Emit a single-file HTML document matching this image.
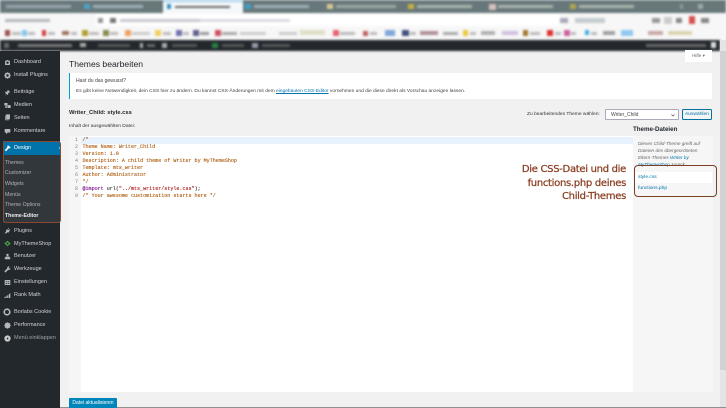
<!DOCTYPE html>
<html lang="de"><head><meta charset="utf-8"><title>Themes bearbeiten</title>
<style>
*{box-sizing:border-box}
html,body{margin:0;padding:0;width:726px;height:408px;overflow:hidden;background:#f1f1f1;font-family:"Liberation Sans",sans-serif}
#w{position:absolute;left:0;top:0;width:726px;height:408px;overflow:hidden;filter:blur(.35px);background:#f1f1f1}
.a{position:absolute;white-space:nowrap}
#top{position:absolute;left:0;top:0;width:726px;height:51px;overflow:hidden;filter:blur(1px)}
#top i{position:absolute;display:block}
.n{position:absolute;left:14px;font-size:5.5px;color:#d0d3d6;white-space:nowrap;line-height:8px}
.s{position:absolute;left:5px;font-size:5.2px;color:#b0b4b7;white-space:nowrap;line-height:8px}
.ic{position:absolute;left:3.5px;width:7px;height:7px;fill:#b4b8bc}
.code{position:absolute;left:82.5px;font:5.05px/7px "Liberation Mono",monospace;color:#aa5500;white-space:nowrap;-webkit-text-stroke:.1px}
.ln{position:absolute;left:64px;width:14px;text-align:right;font:5px/7px "Liberation Mono",monospace;color:#888}
</style></head><body><div id="w">
<div id="top">
<i style="left:0;top:0;width:726px;height:13px;background:#68787a"></i>
<i style="left:163px;top:0;width:80px;height:13px;background:#f4f8fa"></i>
<i style="left:163px;top:0;width:80px;height:2px;background:#a8d4f0"></i>
<i style="left:6px;top:5px;width:65px;height:3px;background:#9aa5ad"></i>
<i style="left:84px;top:4px;width:6px;height:5px;background:#4aa3c8"></i>
<i style="left:93px;top:5px;width:50px;height:3px;background:#9fb0b5"></i>
<i style="left:167px;top:4px;width:4px;height:5px;background:#3b8fc0"></i>
<i style="left:175px;top:6px;width:55px;height:2px;background:#666"></i>
<i style="left:245px;top:4px;width:6px;height:5px;background:#3fa0c8"></i>
<i style="left:254px;top:5px;width:55px;height:3px;background:#9fb0b5"></i>
<i style="left:327px;top:4px;width:6px;height:5px;background:#d8c890"></i>
<i style="left:336px;top:5px;width:60px;height:3px;background:#9fa8a5"></i>
<i style="left:408px;top:4px;width:6px;height:5px;background:#c8b040"></i>
<i style="left:417px;top:5px;width:55px;height:3px;background:#a9b3ae"></i>
<i style="left:489px;top:4px;width:7px;height:6px;background:#d8c0c0"></i>
<i style="left:498px;top:5px;width:55px;height:3px;background:#a9b3ae"></i>
<i style="left:570px;top:4px;width:6px;height:5px;background:#b0a850"></i>
<i style="left:579px;top:5px;width:55px;height:3px;background:#a9b3ae"></i>
<i style="left:680px;top:4px;width:3px;height:5px;background:#8a9a9a"></i>
<i style="left:698px;top:4px;width:5px;height:5px;background:#9aa8a8"></i>
<i style="left:0;top:13px;width:726px;height:27px;background:#f7f7f7"></i>
<i style="left:96px;top:14px;width:464px;height:12px;background:#fff"></i>
<i style="left:5px;top:19px;width:45px;height:3px;background:#b5b8bb"></i>
<i style="left:98px;top:18px;width:5px;height:5px;background:#999"></i>
<i style="left:110px;top:18px;width:6px;height:5px;background:#777"></i>
<i style="left:120px;top:19px;width:80px;height:3px;background:#c8c8d0"></i>
<i style="left:200px;top:19px;width:90px;height:3px;background:#dcdce2"></i>
<i style="left:560px;top:18px;width:8px;height:5px;background:#aab"></i>
<i style="left:575px;top:18px;width:30px;height:5px;background:#c5ccd0"></i>
<i style="left:652px;top:18px;width:8px;height:5px;background:#999"></i>
<i style="left:664px;top:17px;width:8px;height:7px;background:#ccc"></i>
<i style="left:676px;top:18px;width:6px;height:5px;background:#888"></i>
<i style="left:689px;top:16px;width:6px;height:8px;background:#d85050"></i>
<i style="left:701px;top:18px;width:8px;height:5px;background:#888"></i>
<i style="left:5px;top:30px;width:5px;height:6px;background:#a05050"></i><i style="left:12px;top:32px;width:9px;height:3px;background:#bbb"></i>
<i style="left:22px;top:30px;width:5px;height:6px;background:#80c8f0"></i><i style="left:28px;top:32px;width:7px;height:3px;background:#bbb"></i>
<i style="left:42px;top:30px;width:4px;height:6px;background:#d04040"></i><i style="left:48px;top:32px;width:7px;height:3px;background:#bbb"></i>
<i style="left:62px;top:31px;width:7px;height:4px;background:#a07060"></i><i style="left:71px;top:32px;width:6px;height:3px;background:#bbb"></i>
<i style="left:82px;top:30px;width:6px;height:6px;background:#b0a030"></i><i style="left:89px;top:32px;width:10px;height:3px;background:#bbb"></i>
<i style="left:103px;top:30px;width:6px;height:6px;background:#8a8a50"></i><i style="left:110px;top:32px;width:8px;height:3px;background:#bbb"></i>
<i style="left:125px;top:30px;width:6px;height:6px;background:#f0a060"></i><i style="left:132px;top:32px;width:18px;height:3px;background:#ccc"></i>
<i style="left:155px;top:30px;width:6px;height:6px;background:#f0d060"></i><i style="left:163px;top:32px;width:8px;height:3px;background:#bbb"></i>
<i style="left:176px;top:30px;width:6px;height:6px;background:#7070b0"></i><i style="left:183px;top:32px;width:6px;height:3px;background:#bbb"></i>
<i style="left:193px;top:30px;width:6px;height:6px;background:#606090"></i><i style="left:200px;top:32px;width:9px;height:3px;background:#999"></i>
<i style="left:215px;top:30px;width:6px;height:6px;background:#d05060"></i><i style="left:222px;top:32px;width:15px;height:3px;background:#aaa"></i>
<i style="left:240px;top:32px;width:26px;height:3px;background:#ccc"></i>
<i style="left:279px;top:32px;width:18px;height:3px;background:#ccc"></i>
<i style="left:300px;top:30px;width:25px;height:5px;background:#e0e0c8"></i>
<i style="left:333px;top:30px;width:6px;height:6px;background:#e86070"></i><i style="left:340px;top:32px;width:15px;height:3px;background:#bbb"></i>
<i style="left:363px;top:31px;width:5px;height:5px;background:#c06060"></i><i style="left:370px;top:32px;width:7px;height:3px;background:#bbb"></i>
<i style="left:385px;top:30px;width:10px;height:6px;background:#80a8d8"></i>
<i style="left:402px;top:30px;width:7px;height:6px;background:#405080"></i><i style="left:410px;top:32px;width:6px;height:3px;background:#bbb"></i>
<i style="left:420px;top:31px;width:18px;height:4px;background:#b09098"></i>
<i style="left:443px;top:32px;width:15px;height:3px;background:#aaa"></i>
<i style="left:463px;top:30px;width:5px;height:6px;background:#e8c840"></i><i style="left:470px;top:32px;width:6px;height:3px;background:#bbb"></i>
<i style="left:481px;top:31px;width:14px;height:4px;background:#b0b0b0"></i>
<i style="left:502px;top:31px;width:16px;height:4px;background:#d0c0e0"></i>
<i style="left:523px;top:30px;width:5px;height:6px;background:#a07830"></i><i style="left:530px;top:32px;width:10px;height:3px;background:#bbb"></i>
<i style="left:547px;top:30px;width:6px;height:6px;background:#e03030"></i><i style="left:555px;top:32px;width:6px;height:3px;background:#bbb"></i>
<i style="left:564px;top:30px;width:6px;height:6px;background:#d060a0"></i><i style="left:571px;top:32px;width:5px;height:3px;background:#bbb"></i>
<i style="left:585px;top:30px;width:4px;height:5px;background:#40b0e0"></i><i style="left:591px;top:32px;width:6px;height:3px;background:#bbb"></i>
<i style="left:603px;top:31px;width:12px;height:4px;background:#a0a0a0"></i>
<i style="left:621px;top:30px;width:12px;height:6px;background:#90c8f0"></i>
<i style="left:648px;top:31px;width:15px;height:4px;background:#c8a8a8"></i>
<i style="left:668px;top:31px;width:24px;height:4px;background:#dcd4b0"></i>
<i style="left:0;top:40px;width:720px;height:11px;background:#23282d"></i>
<i style="left:4px;top:43px;width:5px;height:5px;background:#666"></i>
<i style="left:18px;top:44px;width:54px;height:3px;background:#777"></i>
<i style="left:80px;top:43px;width:6px;height:4px;background:#aaa"></i>
<i style="left:98px;top:44px;width:32px;height:3px;background:#555"></i>
<i style="left:140px;top:43px;width:3px;height:5px;background:#aaa"></i>
<i style="left:147px;top:44px;width:8px;height:3px;background:#666"></i>
<i style="left:162px;top:43px;width:5px;height:5px;background:#aaa"></i>
<i style="left:172px;top:44px;width:25px;height:3px;background:#555"></i>
<i style="left:212px;top:43px;width:6px;height:5px;background:#2a8040"></i>
<i style="left:222px;top:44px;width:22px;height:3px;background:#555"></i>
<i style="left:252px;top:43px;width:6px;height:5px;background:#99a"></i>
<i style="left:262px;top:44px;width:28px;height:3px;background:#555"></i>
<i style="left:646px;top:44px;width:60px;height:3px;background:#666"></i>
<i style="left:711px;top:42px;width:5px;height:6px;background:#ddd"></i>
</div>

<!-- scrollbar -->
<div class="a" style="left:720px;top:40px;width:6px;height:367px;background:#e4e4e4"></div>
<div class="a" style="left:720px;top:51px;width:6px;height:319px;background:#d2d2d2"></div>
<div class="a" style="left:60px;top:407px;width:666px;height:1px;background:#8f8f8f"></div>

<!-- sidebar -->
<div class="a" style="left:0;top:51px;width:60px;height:357px;background:#23282d"></div>
<div class="a" style="left:3px;top:141px;width:57px;height:82px;background:#32373c"></div>
<div class="a" style="left:3px;top:141px;width:57px;height:14px;background:#0073aa"></div>
<div class="a" style="left:57px;top:146px;width:0;height:0;border:2px solid transparent;border-right-color:#f1f1f1"></div>

<svg class="ic" style="top:58.5px" viewBox="0 0 20 20"><path d="M3 5h4l1-2h4l1 2h4v12H3zM10 7a3.5 3.5 0 1 0 0 7 3.5 3.5 0 0 0 0-7z"/></svg>
<span class="n" style="top:58px">Dashboard</span>
<svg class="ic" style="top:71.5px" viewBox="0 0 20 20"><path fill-rule="evenodd" d="M8 1h4l.6 2.6 2.2-1.3 2.9 2.9-1.3 2.2L19 8v4l-2.6.6 1.3 2.2-2.9 2.9-2.2-1.3L12 19H8l-.6-2.6-2.2 1.3-2.9-2.9 1.3-2.2L1 12V8l2.6-.6-1.3-2.2 2.9-2.9 2.2 1.3zM10 6.5a3.5 3.5 0 1 0 0 7 3.5 3.5 0 0 0 0-7z"/></svg>
<span class="n" style="top:71px">Install Plugins</span>
<svg class="ic" style="top:88.5px" viewBox="0 0 20 20"><path d="M11 2l7 7-2 1-1-1-3 3 0 4-2 1-3-3-5 5 4-6-3-3 1-2h4l3-3-1-1z"/></svg>
<span class="n" style="top:88px">Beiträge</span>
<svg class="ic" style="top:101.5px" viewBox="0 0 20 20"><path d="M1 3h9v7H1zM10 9h9v8h-9zM4 11h4v6H4z"/></svg>
<span class="n" style="top:101px">Medien</span>
<svg class="ic" style="top:114px" viewBox="0 0 20 20"><path d="M6 1h11v14H6zM3 4h2v12h9v2H3z"/></svg>
<span class="n" style="top:113.5px">Seiten</span>
<svg class="ic" style="top:127.5px" viewBox="0 0 20 20"><path d="M2 3h16v10h-7l-5 5v-5H2z"/></svg>
<span class="n" style="top:127px">Kommentare</span>
<svg class="ic" style="top:144.5px;fill:#fff" viewBox="0 0 20 20"><path d="M12 1l7 6-2 3-3-1-8 9-4-3 8-9-1-3z"/></svg>
<span class="n" style="top:144px;color:#fff">Design</span>
<span class="s" style="top:158.5px">Themes</span>
<span class="s" style="top:169px">Customizer</span>
<span class="s" style="top:179.5px">Widgets</span>
<span class="s" style="top:190.5px">Menüs</span>
<span class="s" style="top:201px">Theme Options</span>
<span class="s" style="top:211.5px;color:#eee;font-weight:bold">Theme-Editor</span>
<svg class="ic" style="top:226.5px" viewBox="0 0 20 20"><path d="M12 2l2 2-3 3 2 2 3-3 2 2-3 3v3l-3 2-2-1-5 4-3-1 4-5-1-2 2-3h3z"/></svg>
<span class="n" style="top:226.5px">Plugins</span>
<svg class="ic" style="top:239.5px;fill:#46a546" viewBox="0 0 20 20"><path fill-rule="evenodd" d="M10 2l9 8-9 8-9-8zM10 7a3 3 0 1 0 0 6 3 3 0 0 0 0-6z"/></svg>
<span class="n" style="top:239.5px">MyThemeShop</span>
<svg class="ic" style="top:252.5px" viewBox="0 0 20 20"><path d="M10 2a3.5 3.5 0 1 1 0 7 3.5 3.5 0 0 1 0-7zM5 10h10l3 5v3H2v-3z"/></svg>
<span class="n" style="top:252px">Benutzer</span>
<svg class="ic" style="top:265.5px" viewBox="0 0 20 20"><path d="M14 1a5 5 0 0 0-5 6L1 15l3 4 8-8a5 5 0 0 0 7-5l-3 2-3-2 3-4z"/></svg>
<span class="n" style="top:265px">Werkzeuge</span>
<svg class="ic" style="top:278.5px" viewBox="0 0 20 20"><path fill-rule="evenodd" d="M2 3h16v14H2zM5 6v2h4V6zM11 6v2h4V6zM5 11v3h4v-3zM11 11v3h4v-3z"/></svg>
<span class="n" style="top:278px">Einstellungen</span>
<svg class="ic" style="top:291.5px" viewBox="0 0 20 20"><path d="M1 15l4-3v5H1zM7 11l4-2v8H7zM13 8l5-5v14h-5z"/></svg>
<span class="n" style="top:291px">Rank Math</span>
<svg class="ic" style="top:307.5px;left:3px;width:8px;height:8px" viewBox="0 0 20 20"><path fill-rule="evenodd" d="M10 1a9 9 0 1 1 0 18 9 9 0 0 1 0-18zM10 5a5 5 0 1 0 0 10 5 5 0 0 0 0-10z"/></svg>
<span class="n" style="top:308px">Borlabs Cookie</span>
<svg class="ic" style="top:321.5px" viewBox="0 0 20 20"><path fill-rule="evenodd" d="M8 1h4l.6 2.6 2.2-1.3 2.9 2.9-1.3 2.2L19 8v4l-2.6.6 1.3 2.2-2.9 2.9-2.2-1.3L12 19H8l-.6-2.6-2.2 1.3-2.9-2.9 1.3-2.2L1 12V8l2.6-.6-1.3-2.2 2.9-2.9 2.2 1.3z"/></svg>
<span class="n" style="top:321px">Performance</span>
<svg class="ic" style="top:334.5px;fill:#c8cacc" viewBox="0 0 20 20"><path fill-rule="evenodd" d="M10 1a9 9 0 1 1 0 18 9 9 0 0 1 0-18zM12 6l-5 4 5 4z"/></svg>
<span class="n" style="top:334px;color:#9ea3a8">Menü einklappen</span>

<div class="a" style="left:2.5px;top:140.5px;width:58px;height:82.5px;border:1.1px solid #8a4a30;border-radius:3px"></div>

<!-- main -->
<div class="a" style="left:69px;top:58px;font-size:8.6px;line-height:12px;color:#23282d">Themes bearbeiten</div>

<div class="a" style="left:685px;top:50px;width:27px;height:12px;background:#fff;font-size:4.6px;line-height:12px;color:#666;text-align:center">Hilfe ▾</div>

<div class="a" style="left:69px;top:73px;width:643px;height:26px;background:#fff;border-left:1.5px solid #00a0d2"></div>
<div class="a" style="left:76px;top:77px;font-size:5.1px;line-height:8px;color:#444">Hast du das gewusst?</div>
<div class="a" style="left:76px;top:88px;font-size:4.88px;line-height:8px;color:#444">Es gibt keine Notwendigkeit, dein CSS hier zu ändern. Du kannst CSS-Änderungen mit dem <span style="color:#0073aa;text-decoration:underline">eingebauten CSS-Editor</span> vornehmen und die diese direkt als Vorschau anzeigen lassen.</div>

<div class="a" style="left:69px;top:109px;font-size:5.85px;line-height:9px;font-weight:bold;color:#23282d">Writer_Child: style.css</div>
<div class="a" style="left:69px;top:123px;font-size:4.9px;line-height:8px;color:#333">Inhalt der ausgewählten Datei:</div>

<div class="a" style="left:527px;top:111px;font-size:4.9px;line-height:8px;color:#333">Zu bearbeitendes Theme wählen:</div>
<div class="a" style="left:605px;top:109px;width:74px;height:11px;background:#fff;border:.6px solid #aab;border-radius:1px;font-size:5px;line-height:10px;padding-left:5px;color:#444">Writer_Child<svg style="position:absolute;right:3.5px;top:3.5px;width:4px;height:3px" viewBox="0 0 8 6"><path d="M1 1l3 3 3-3" fill="none" stroke="#555" stroke-width="1.5"/></svg></div>
<div class="a" style="left:682px;top:109px;width:30px;height:11px;background:#f3f5f6;border:.6px solid #0071a1;border-radius:1.5px;font-size:4.9px;line-height:10px;text-align:center;color:#0071a1">Auswählen</div>

<!-- editor -->
<div class="a" style="left:69px;top:136px;width:564px;height:256px;background:#fff"></div>
<div class="a" style="left:69px;top:136px;width:11.5px;height:256px;background:#f6f6f6"></div>
<div class="a" style="left:80.5px;top:137px;width:552.5px;height:7px;background:#e8f2ff"></div>
<div class="ln" style="top:137px;left:64px">1<br>2<br>3<br>4<br>5<br>6<br>7<br>8<br>9</div>
<div class="code" style="top:137px;left:82.5px">/*<br>Theme Name: Writer_Child<br>Version: 1.0<br>Description: A child theme of Writer by MyThemeShop<br>Template: mts_writer<br>Author: Administrator<br>*/<br><span style="color:#708">@import</span> <span style="color:#333">url(</span><span style="color:#a11">"../mts_writer/style.css"</span><span style="color:#333">);</span><br>/* Your awesome customization starts here */</div>

<!-- file list -->
<div class="a" style="left:633px;top:125px;font-size:6.2px;line-height:9px;font-weight:bold;color:#23282d">Theme-Dateien</div>
<div class="a" style="left:633px;top:136px;width:80px;height:256px;background:#f6f6f6"></div>
<div class="a" style="left:638px;top:139.5px;font-size:4.7px;line-height:7px;font-style:italic;color:#666">Dieses Child-Theme greift auf<br>Dateien des übergeordneten<br>Eltern-Themes <span style="color:#0073aa">Writer by</span><br><span style="color:#0073aa">MyThemeShop</span> zurück.</div>
<div class="a" style="left:634px;top:171.5px;width:78px;height:11px;background:#fff"></div>
<div class="a" style="left:638px;top:173.5px;font-size:4.9px;line-height:7px;color:#0073aa">style.css</div>
<div class="a" style="left:638px;top:184.5px;font-size:4.9px;line-height:7px;color:#0073aa">functions.php</div>
<div class="a" style="left:633.5px;top:165px;width:83.5px;height:32px;border:1.3px solid #7a3f25;border-radius:4px"></div>

<!-- annotation text -->
<div class="a" style="left:480px;top:163px;width:146px;text-align:right;font-family:'DejaVu Sans',sans-serif;font-size:10px;line-height:13.5px;letter-spacing:-.3px;color:#8a3d20;-webkit-text-stroke:.25px #8a3d20">Die CSS-Datei und die<br>functions.php deines<br>Child-Themes</div>

<div class="a" style="left:69px;top:398px;width:48px;height:10px;background:#0085ba;border-radius:1px 1px 0 0;font-size:5px;line-height:10px;text-align:center;color:#fff">Datei aktualisieren</div>
</div></body></html>
